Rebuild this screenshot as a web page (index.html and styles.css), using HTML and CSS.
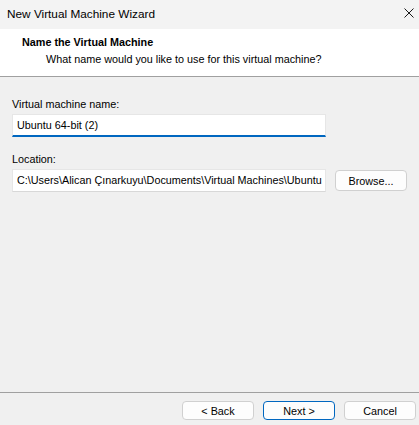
FILE: index.html
```html
<!DOCTYPE html>
<html>
<head>
<meta charset="utf-8">
<link rel="stylesheet" href="styles.css">
</head>
<body>
<div class="window">
  <div class="titlebar">
    <span class="title">New Virtual Machine Wizard</span>
    <svg class="close" width="10" height="10" viewBox="0 0 10 10"><path d="M0.5 0.5 L9.5 9.5 M9.5 0.5 L0.5 9.5" stroke="#1a1a1a" stroke-width="1" fill="none"/></svg>
  </div>
  <div class="header">
    <div class="h-title">Name the Virtual Machine</div>
    <div class="h-sub">What name would you like to use for this virtual machine?</div>
  </div>
  <div class="main">
    <div class="label first">Virtual machine name:</div>
    <div class="field focused">Ubuntu 64-bit (2)</div>
    <div class="label second">Location:</div>
    <div class="row">
      <div class="field plain"><span class="clip">C:\Users\Alican Çınarkuyu\Documents\Virtual Machines\Ubuntu 64-bit (2)</span></div>
      <div class="btn browse">Browse...</div>
    </div>
  </div>
  <div class="footer">
    <div class="btn">&lt; Back</div>
    <div class="btn primary">Next &gt;</div>
    <div class="btn">Cancel</div>
  </div>
</div>
</body>
</html>
```

FILE: styles.css
```css
html, body {
  margin: 0;
  padding: 0;
}
body {
  background: #f0f0f0;
  font-family: "Liberation Sans", Arial, sans-serif;
  font-size: 10.8px;
  color: #000;
}
.window {
  width: 419px;
  height: 425px;
  display: flex;
  flex-direction: column;
  overflow: hidden;
}
.titlebar {
  height: 29px;
  flex: none;
  background: #f3f3f3;
  display: flex;
  align-items: center;
  justify-content: space-between;
  padding: 0 5px 0 7px;
  box-sizing: border-box;
}
.title {
  font-size: 11.8px;
  line-height: 16px;
  margin-top: -1px;
}
.close {
  display: block;
  margin-top: -3px;
}
.header {
  height: 48px;
  flex: none;
  box-sizing: border-box;
  background: #fff;
  border-bottom: 1px solid #a0a0a0;
  padding: 5px 0 0 22px;
}
.h-title {
  font-weight: bold;
  line-height: 16px;
}
.h-sub {
  line-height: 16px;
  margin-top: 1px;
  padding-left: 24px;
}
.main {
  flex: 1;
  padding: 0 12px;
}
.label {
  line-height: 16px;
}
.label.first {
  margin-top: 19px;
  margin-bottom: 2px;
}
.label.second {
  margin-top: 14px;
  margin-bottom: 2px;
}
.field {
  width: 314px;
  height: 23px;
  flex: none;
  box-sizing: border-box;
  background: #fff;
  border: 1px solid #e6e6e6;
  padding: 0 3px 0 4px;
  line-height: 20px;
  white-space: nowrap;
  overflow: hidden;
}
.field.focused {
  border-bottom: 2px solid #0067c0;
}
.field.plain {
  border-bottom: 1px solid #d8d8d8;
}
.clip {
  display: block;
  overflow: hidden;
}
.row {
  display: flex;
  align-items: center;
  gap: 9px;
}
.btn {
  width: 72px;
  height: 19px;
  box-sizing: border-box;
  background: #fdfdfd;
  border: 1px solid #d0d0d0;
  border-radius: 4px;
  display: flex;
  align-items: center;
  justify-content: center;
  line-height: 16px;
}
.btn.browse {
  height: 21px;
}
.btn.primary {
  border-color: #0067c0;
}
.footer {
  flex: none;
  height: 33px;
  box-sizing: border-box;
  border-top: 1px solid #a0a0a0;
  display: flex;
  justify-content: flex-end;
  gap: 9px;
  padding: 8px 3px 0 0;
}
```
